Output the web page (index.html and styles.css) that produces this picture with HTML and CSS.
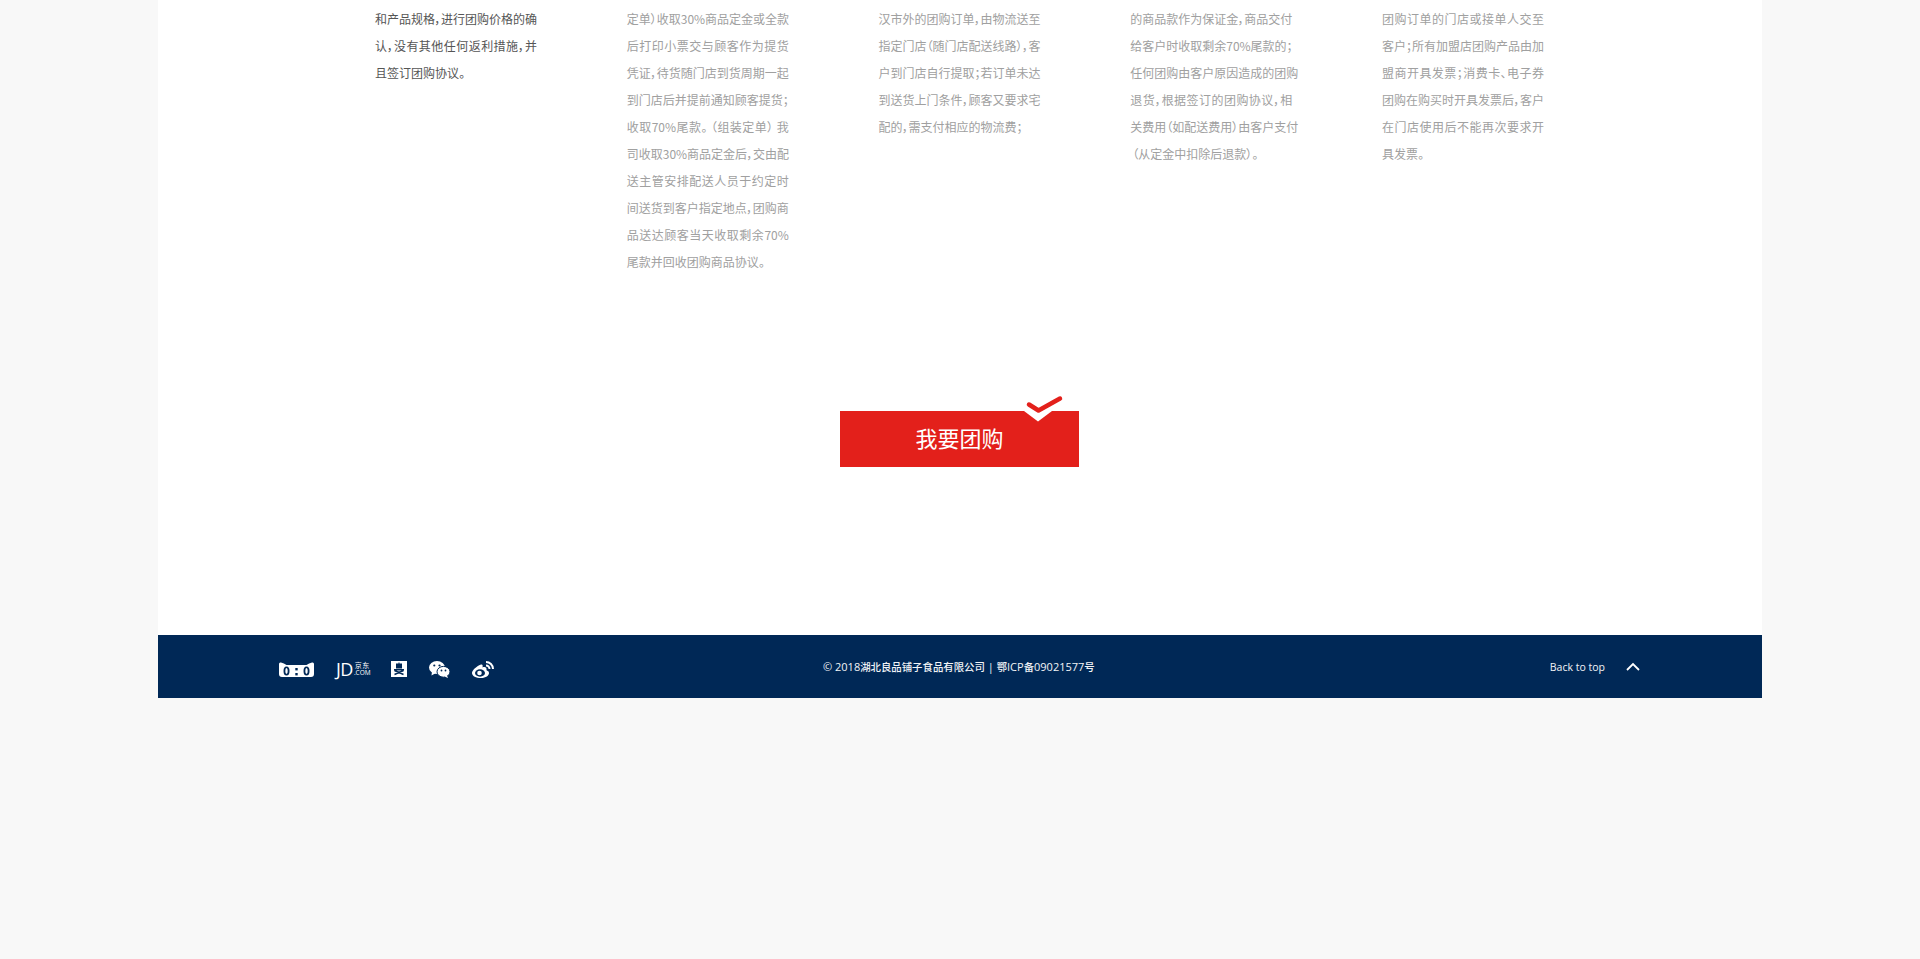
FILE: index.html
```html
<!DOCTYPE html>
<html lang="zh-CN">
<head>
<meta charset="utf-8">
<title>团购</title>
<link rel="stylesheet" href="styles.css">
</head>
<body>
<div class="page">
  <main class="sheet">
    <section class="cols">
      <div class="col col-dark">
        <p>和产品规格，进行团购价格的确</p><p>认，没有其他任何返利措施，并</p><p class="end">且签订团购协议。</p>
      </div>
      <div class="col">
        <p>定单）收取30%商品定金或全款</p><p>后打印小票交与顾客作为提货</p><p>凭证，待货随门店到货周期一起</p><p>到门店后并提前通知顾客提货；</p><p>收取70%尾款。 （组装定单） 我</p><p>司收取30%商品定金后，交由配</p><p>送主管安排配送人员于约定时</p><p>间送货到客户指定地点，团购商</p><p>品送达顾客当天收取剩余70%</p><p class="end">尾款并回收团购商品协议。</p>
      </div>
      <div class="col">
        <p>汉市外的团购订单，由物流送至</p><p>指定门店（随门店配送线路），客</p><p>户到门店自行提取；若订单未达</p><p>到送货上门条件，顾客又要求宅</p><p class="end">配的，需支付相应的物流费；</p>
      </div>
      <div class="col">
        <p>的商品款作为保证金，商品交付</p><p>给客户时收取剩余70%尾款的；</p><p>任何团购由客户原因造成的团购</p><p>退货，根据签订的团购协议，相</p><p class="wide">关费用（如配送费用）由客户支付</p><p class="end inset">（从定金中扣除后退款）。</p>
      </div>
      <div class="col">
        <p>团购订单的门店或接单人交至</p><p>客户；所有加盟店团购产品由加</p><p>盟商开具发票；消费卡、电子券</p><p>团购在购买时开具发票后，客户</p><p>在门店使用后不能再次要求开</p><p class="end">具发票。</p>
      </div>
    </section>
    <div class="cta-wrap">
      <a class="cta">我要团购
        <svg class="cta-check" viewBox="0 0 46 32" width="46" height="32"><path d="M4 19 L18 29.500 L32 19 Z" fill="#fff"/><path d="M9 12.500 L18.500 18.500 L40 6.500" fill="none" stroke="#e3201b" stroke-width="4.500" stroke-linecap="round" stroke-linejoin="round"/></svg>
      </a>
    </div>
  </main>
  <footer class="foot">
    <div class="socials">
      <svg class="ico" width="35" height="15" viewBox="0 0 35 15"><path fill="#fff" d="M0 2 Q0 0 2 0.500 Q5 1 7.500 3 H27.500 Q30 1 33 0.500 Q35 0 35 2 V12 Q35 15 32 15 H3 Q0 15 0 12 Z"/><ellipse cx="7.500" cy="9" rx="3" ry="4.500" fill="#002856"/><ellipse cx="27.500" cy="9" rx="3" ry="4.500" fill="#002856"/><ellipse cx="7.500" cy="9" rx="1.200" ry="3" fill="#fff"/><ellipse cx="27.500" cy="9" rx="1.200" ry="3" fill="#fff"/><rect x="16.300" y="6" width="2.400" height="2.400" fill="#002856"/><rect x="16.300" y="11" width="2.400" height="2.400" fill="#002856"/></svg>
      <span class="jd"><span class="jd-big">JD</span><span class="jd-small"><span class="jd-cn">京东</span><span class="jd-com">.COM</span></span></span>
      <svg class="ico" width="16" height="16" viewBox="0 0 16 16"><rect width="16" height="16" fill="#fff"/><rect x="5" y="2.500" width="6" height="5" fill="#002856"/><path d="M7.500 1.500 H8.500 V3 H7.500 Z" fill="#002856"/><path d="M3 8.800 H13 M3.500 13.500 L12.500 9.500 M12.500 13.500 L3.500 9.500" stroke="#002856" stroke-width="1.500" fill="none"/></svg>
      <svg class="ico" width="21" height="17" viewBox="0 0 21 17"><ellipse cx="8" cy="6.500" rx="8" ry="6.500" fill="#fff"/><path d="M3 10.500 L2.500 14.500 L7 12 Z" fill="#fff"/><ellipse cx="14.500" cy="10.800" rx="6.500" ry="5.400" fill="#fff" stroke="#002856" stroke-width="1"/><path d="M18 14.500 L19 17 L15.500 15.500 Z" fill="#fff"/><circle cx="5.300" cy="4.500" r="1.100" fill="#002856"/><circle cx="10.500" cy="4.500" r="1.100" fill="#002856"/><circle cx="12.500" cy="9.500" r=".9" fill="#002856"/><circle cx="16.500" cy="9.500" r=".9" fill="#002856"/></svg>
      <svg class="ico" width="22" height="17" viewBox="0 0 22 17"><path fill="#fff" d="M9 3.500 C4 5.500 0 9.500 0 12 C0 15 4 17 9 17 C14 17 17 14.500 17 12 C17 9.500 14.500 10 14.500 9 C15 6.500 13 5.500 10.500 6.500 C11 4 10.500 3 9 3.500 Z"/><ellipse cx="8" cy="12" rx="5" ry="3.700" fill="#002856"/><circle cx="7.500" cy="12" r="2.300" fill="#fff"/><path d="M14 1 A7 7 0 0 1 21 8 M14 4.500 A3.500 3.500 0 0 1 17.500 8" stroke="#fff" stroke-width="2" fill="none"/></svg>
    </div>
    <div class="copy">© 2018<span class="cjk">湖北良品铺子食品有限公司</span> | <span class="cjk">鄂</span>ICP<span class="cjk">备</span>09021577<span class="cjk">号</span></div>
    <a class="top">Back to top
      <svg width="14" height="9" viewBox="0 0 14 9"><path d="M1 8 L7 2 L13 8" fill="none" stroke="#fff" stroke-width="1.800"/></svg>
    </a>
  </footer>
</div>
</body>
</html>
```
FILE: styles.css
```css
* { box-sizing: border-box; }
html, body { margin: 0; padding: 0; }
body {
  height: 959px;
  overflow: hidden;
  background: #f8f8f8;
  font-family: "Noto Sans CJK SC", "Noto Sans", sans-serif;
}
.page { width: 1604px; margin-left: 158px; }
.sheet { height: 635px; background: #fff; padding-top: 5px; }
.cols { display: flex; height: 290px; padding-left: 217px; }
.col { width: 251.75px; font-size: 12px; line-height: 27px; color: #a0a0a0; flex: none; font-feature-settings: "palt"; }
.col p { margin: 0; width: 162px; white-space: nowrap; text-align: justify; text-align-last: justify; }
.col p.end { text-align-last: left; }
.col p.wide { width: 164px; }
.col p.inset { padding-left: 2px; }
.col-dark { color: #555; }
.cta-wrap { display: flex; justify-content: center; padding-top: 116px; padding-right: 1px; }
.cta {
  position: relative;
  display: flex; align-items: center; justify-content: center;
  width: 239px; height: 56px;
  padding-bottom: 4px;
  background: #e3201b;
  color: #fff; font-size: 22px;
}
.cta-check { position: absolute; right: 13px; top: -19px; }
.foot {
  height: 63px;
  background: #002856;
  display: flex; align-items: center; justify-content: space-between;
  padding: 0 122px 0 121px;
  position: relative;
  color: #f2f4f7;
}
.socials { display: flex; align-items: center; gap: 22px; padding-top: 5px; }
.ico { display: block; flex: none; }
.jd { display: flex; align-items: center; width: 33px; color: #fff; gap: 1px; font-family: "Open Sans", sans-serif; }
.jd-big { font-size: 18px; line-height: 1; letter-spacing: -.5px; }
.jd-small { display: flex; flex-direction: column; align-items: center; font-size: 7px; line-height: 7px; }
.jd-cn { font-family: "Noto Sans CJK SC", sans-serif; letter-spacing: .5px; }
.jd-com { font-size: 6.5px; }
.copy {
  position: absolute; left: 665px; top: 0; line-height: 63px;
  font-family: "Open Sans", "Noto Sans CJK SC", sans-serif;
  font-size: 11px; font-weight: 500; white-space: nowrap;
}
.cjk { font-size: 10.4px; font-family: "Noto Sans CJK SC", sans-serif; }
.top { display: flex; align-items: center; gap: 21px; font-size: 10.5px; font-family: "Open Sans", sans-serif; }
```
